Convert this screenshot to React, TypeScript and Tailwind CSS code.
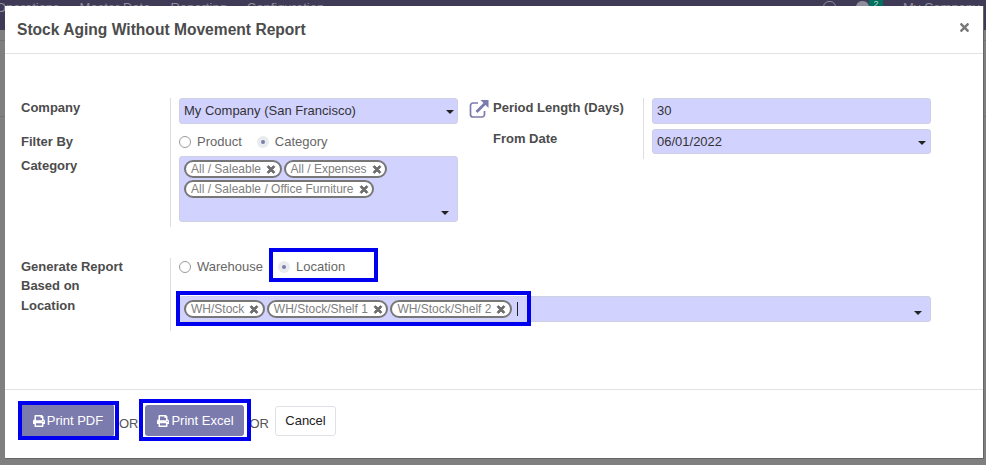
import { FaPrint, FaTimes } from "react-icons/fa";

// ── Small pieces ───────────────────────────────────────────────────────────────

function Caret({ className = "" }: { className?: string }) {
  return (
    <span
      className={`absolute h-0 w-0 border-x-[4px] border-t-[4px] border-x-transparent border-t-[#222] ${className}`}
    />
  );
}

function Tag({ label }: { label: string }) {
  return (
    <span className="inline-flex h-[18px] items-center gap-[5px] rounded-full border-2 border-[#777] bg-white pl-[5px] pr-[3.5px] text-[12px] leading-none text-[#808080]">
      {label}
      <FaTimes className="h-[11px] w-[10px] text-[#6f6f6f]" stroke="currentColor" strokeWidth={45} />
    </span>
  );
}

function Radio({ label, checked }: { label: string; checked?: boolean }) {
  return (
    <span className="inline-flex items-center gap-[6px] text-[13px] text-[#666]">
      {checked ? (
        <span className="flex h-[12px] w-[12px] items-center justify-center rounded-full bg-[#e9ecef]">
          <span className="h-[4px] w-[4px] rounded-full bg-[#7c7bad]" />
        </span>
      ) : (
        <span className="h-[12px] w-[12px] rounded-full border border-[#9a9a9a] bg-white" />
      )}
      {label}
    </span>
  );
}

function Field({ children, className = "" }: { children: React.ReactNode; className?: string }) {
  return (
    <div
      className={`relative flex items-center rounded-[3px] border border-[#cfd0e4] bg-[#d2d2ff] px-[4px] text-[13px] text-[#333] ${className}`}
    >
      {children}
    </div>
  );
}

function ExternalLink() {
  return (
    <svg viewBox="0 0 20 20" className="h-[20px] w-[20px]" fill="none" stroke="#7c7bad">
      <path d="M9 4H4a2.5 2.5 0 0 0-2.5 2.5v9A2.5 2.5 0 0 0 4 18h9a2.5 2.5 0 0 0 2.5-2.5V12" strokeWidth="1.7" />
      <path d="M7.5 13 16 4.5" strokeWidth="2.8" />
      <path d="M11.5 1h8v8z" fill="#7c7bad" stroke="none" />
    </svg>
  );
}

function PrintButton({ label, className = "" }: { label: string; className?: string }) {
  return (
    <button
      className={`flex items-center justify-center gap-[2px] rounded-[3px] bg-[#7c7bad] text-[13px] text-white ${className}`}
    >
      <FaPrint className="h-[12px] w-[12px]" />
      {label}
    </button>
  );
}

// ── App ────────────────────────────────────────────────────────────────────────

export default function App() {
  return (
    <div className="relative h-[465px] w-[986px] overflow-hidden bg-[#7f7f7f] font-['Liberation_Sans',Arial,sans-serif]">
      {/* Navbar dimmed behind the dialog */}
      <div className="flex h-[30px] items-start justify-between bg-[#3f3b56] text-[13px] leading-[13px] text-[#8f8d9c]">
        <div className="-ml-[4px] mt-[1px] flex gap-[20px]">
          <span>Operations</span>
          <span>Master Data</span>
          <span>Reporting</span>
          <span>Configuration</span>
        </div>
        <div className="mt-[1px] flex items-start">
          <span className="h-[12px] w-[13px] rounded-full border border-[#8f8d9c]" />
          <span className="ml-[20px] h-[12px] w-[13px] rounded-full bg-[#8f8d9c]" />
          <span className="-mt-[1px] h-[9px] w-[14px] bg-[#00705f] text-center text-[9px] leading-[9px] text-[#c9d6d3]">2</span>
          <span className="ml-[20px] w-[83px] whitespace-nowrap">My Company</span>
        </div>
      </div>
      <div className="mt-[10px] h-px bg-[#727272]" />
      <div className="mt-[75px] h-px bg-[#727272]" />

      {/* Dialog */}
      <div className="absolute left-[5px] top-[6px] flex h-[453px] w-[979px] flex-col border-b border-r border-[#666] bg-white">
        <header className="flex h-[48px] shrink-0 items-center justify-between border-b border-[#e3e3e3] pl-[12px] pr-[13px]">
          <h1 className="text-[15.6px] font-bold text-[#4c4c4c]">Stock Aging Without Movement Report</h1>
          <FaTimes className="-mt-[4px] h-[13px] w-[11px] text-[#777]" />
        </header>

        <div className="flex-1 pl-[15px] pt-[44px] text-[13px] text-[#4c4c4c]">
          {/* Upper group */}
          <div className="flex">
            <div className="-mt-[2px] flex w-[150px] flex-col pl-[1px] font-bold">
              <div className="h-[36px] pt-[2px]">Company</div>
              <div className="h-[24px]">Filter By</div>
              <div>Category</div>
            </div>
            <div className="h-[129px] w-[288px] border-l border-[#dedede] pl-[8px]">
              <Field className="h-[26px]">
                My Company (San Francisco)
                <Caret className="right-[3px] top-[11px]" />
              </Field>
              <div className="flex h-[32px] items-center gap-[15px] pt-[4px]">
                <Radio label="Product" />
                <Radio label="Category" checked />
              </div>
              <Field className="h-[66px] items-start">
                <div className="flex flex-wrap gap-x-[2px] gap-y-[2px] pt-[3px]">
                  <Tag label="All / Saleable" />
                  <Tag label="All / Expenses" />
                  <Tag label="All / Saleable / Office Furniture" />
                </div>
                <Caret className="bottom-[6px] right-[8px]" />
              </Field>
            </div>
            <div className="ml-[11px] mt-[1px] w-[24px]">
              <ExternalLink />
            </div>
            <div className="-mt-[2px] flex w-[150px] flex-col font-bold">
              <div className="h-[31px] pt-[2px]">Period Length (Days)</div>
              <div className="pt-[2px]">From Date</div>
            </div>
            <div className="h-[61px] w-[288px] border-l border-[#dedede] pl-[8px]">
              <Field className="h-[26px]">30</Field>
              <Field className="mt-[5px] h-[25px]">
                06/01/2022
                <Caret className="right-[4px] top-[11px]" />
              </Field>
            </div>
          </div>

          {/* Lower group */}
          <div className="mt-[31px] flex">
            <div className="flex w-[150px] flex-col gap-[4px] pl-[1px] font-bold leading-[15px]">
              <div className="pt-[1px]">Generate Report</div>
              <div>Based on</div>
              <div className="pt-[1px]">Location</div>
            </div>
            <div className="h-[73px] w-[761px] border-l border-[#dedede] pl-[8px]">
              <div className="flex h-[18px] items-center gap-[15px]">
                <Radio label="Warehouse" />
                <Radio label="Location" checked />
              </div>
              <Field className="mt-[20px] h-[26px]">
                <div className="flex items-center gap-[2px]">
                  <Tag label="WH/Stock" />
                  <Tag label="WH/Stock/Shelf 1" />
                  <Tag label="WH/Stock/Shelf 2" />
                  <span className="ml-[3px] h-[14px] w-px bg-[#222]" />
                </div>
                <Caret className="right-[8px] top-[14px]" />
              </Field>
            </div>
          </div>
        </div>

        <footer className="flex h-[69px] shrink-0 items-start border-t border-[#e3e3e3] pl-[16px] text-[13px] text-[#555]">
          <PrintButton label="Print PDF" className="mt-[14px] h-[33px] w-[93px] pl-[1px]" />
          <span className="ml-[5px] mt-[27px] leading-none">OR</span>
          <PrintButton label="Print Excel" className="ml-[6px] mt-[15px] h-[31px] w-[99px] pl-[3px]" />
          <span className="ml-[6px] mt-[27px] leading-none">OR</span>
          <button className="ml-[6px] mt-[16px] h-[30px] w-[61px] rounded-[3px] border border-[#dee2e6] bg-white text-[13px] text-[#222]">
            Cancel
          </button>
        </footer>
      </div>

      {/* Blue annotation boxes drawn over the screenshot */}
      <div className="absolute left-[269px] top-[248px] h-[34px] w-[109px] border-4 border-[#0000f0]" />
      <div className="absolute left-[176px] top-[291px] h-[35px] w-[355px] border-4 border-[#0000f0]" />
      <div className="absolute left-[18px] top-[401px] h-[39px] w-[101px] border-[4px] border-[#0000f0]" />
      <div className="absolute left-[139px] top-[399px] h-[42px] w-[112px] border-[4px] border-[#0000f0]" />
    </div>
  );
}
